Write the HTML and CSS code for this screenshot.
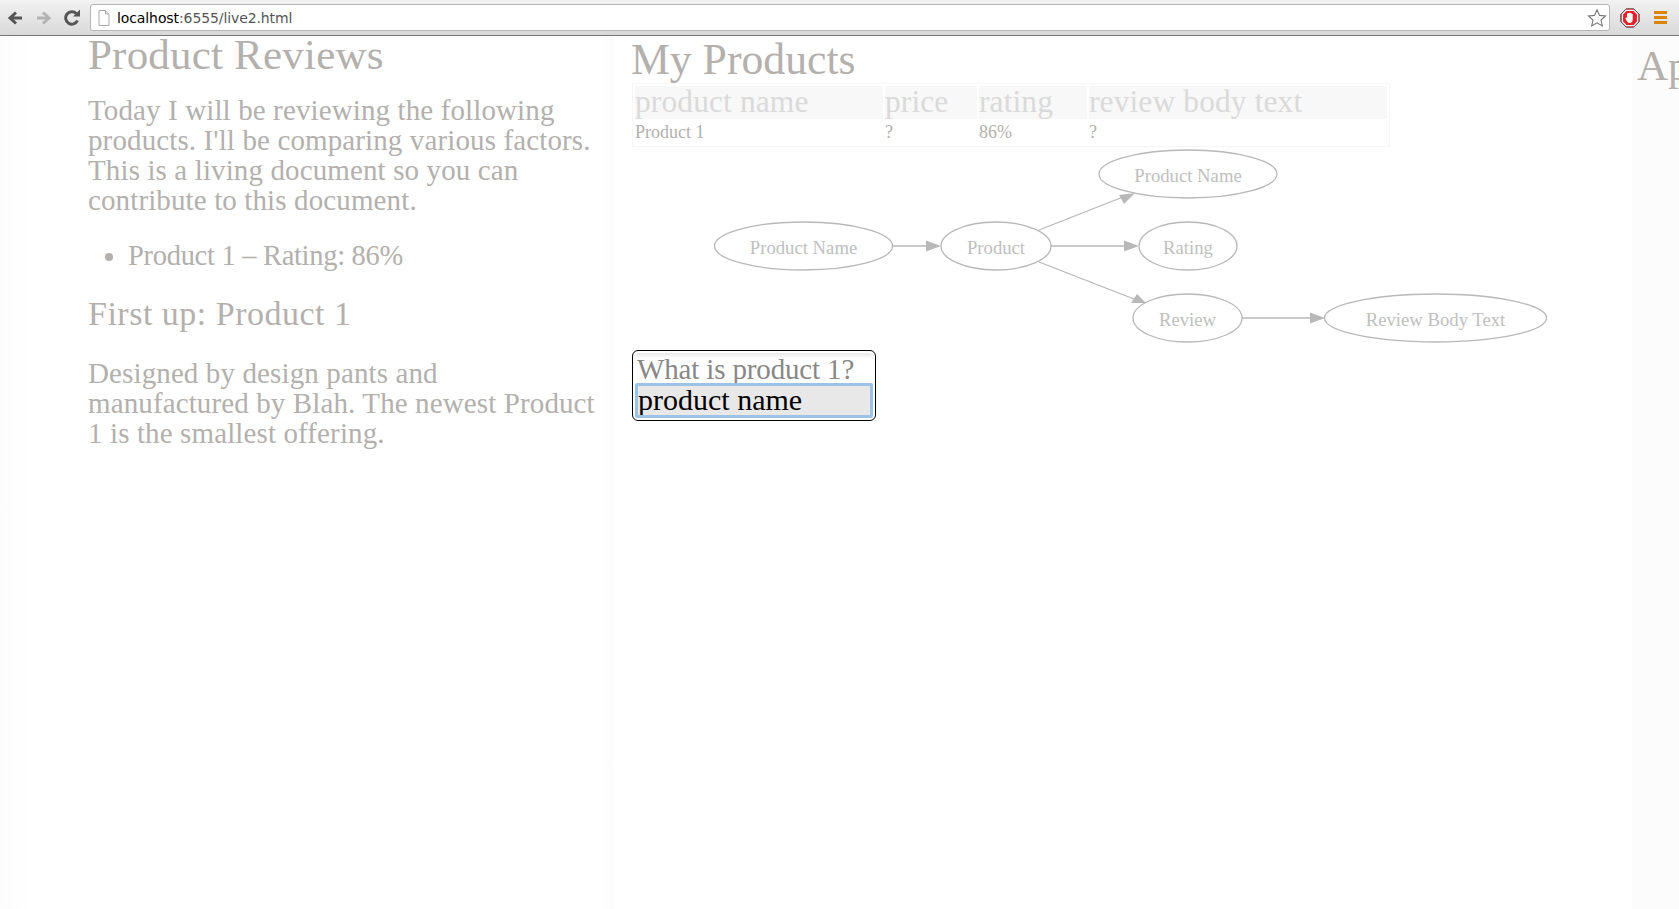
FILE: index.html
```html
<!DOCTYPE html>
<html lang="en">
<head>
<meta charset="utf-8">
<title>live2</title>
<link rel="stylesheet" href="styles.css">
</head>
<body>
<header class="toolbar">
  <svg class="tool back" width="20" height="20" viewBox="0 0 20 20"><path d="M17 10H6M11 4.500 5 10l6 5.500" fill="none" stroke="#555" stroke-width="3"/></svg>
  <svg class="tool fwd" width="20" height="20" viewBox="0 0 20 20"><path d="M3 10h11M9 4.500 15 10l-6 5.500" fill="none" stroke="#b4b4b4" stroke-width="3"/></svg>
  <svg class="tool reload" width="20" height="20" viewBox="0 0 20 20"><path d="M15.500 12.500A6.200 6.200 0 1 1 14.300 5.600" fill="none" stroke="#555" stroke-width="3"/><path d="M11 8.500h7v-7z" fill="#555"/></svg>
  <div class="urlbar">
    <svg class="doc" width="12" height="16" viewBox="0 0 12 16"><path d="M1 .5h6.500l3.500 3.500v11.500H1z" fill="#fff" stroke="#aaa"/><path d="M7.500.5V4H11" fill="#e8e8e8" stroke="#aaa"/></svg>
    <span class="url"><span class="host">localhost</span>:6555/live2.html</span>
    <svg class="star" width="20" height="20" viewBox="0 0 20 20"><path d="m10 1.800 2.500 5.600 6 .6-4.500 4 1.300 6-5.300-3.100L4.700 18 6 12 1.500 8l6-.6z" fill="#fff" stroke="#777" stroke-width="1.100"/></svg>
  </div>
  <svg class="ext" width="20" height="20" viewBox="0 0 20 20"><path d="M6.200.8h7.600l5.400 5.400v7.600l-5.400 5.400H6.200L.8 13.800V6.200z" fill="#e8202a" stroke="#555" stroke-width="1"/><path d="M6.200 2.400h7.600l3.800 3.800v7.600l-3.800 3.800H6.200l-3.800-3.800V6.200z" fill="#e8202a" stroke="#fff" stroke-width="1.300"/><path d="M7 9V5.500h1.300V5h1V4.800h1.200V5.300h1.200V6h1V11.500c0 2-1 3.500-3 3.500-1.800 0-2.500-1-3.500-3L5.300 10l1-.3z" fill="#fff"/></svg>
  <div class="menu"><i></i><i></i><i></i></div>
</header>
<main class="page">
  <section class="doc-pane">
    <h1 class="doc-title">Product Reviews</h1>
    <p class="intro">Today I will be reviewing the following<br>products. I'll be comparing various factors.<br>This is a living document so you can<br>contribute to this document.</p>
    <ul class="list"><li>Product 1 – Rating: 86%</li></ul>
    <h2 class="sub">First up: Product 1</h2>
    <p class="detail">Designed by design pants and<br>manufactured by Blah. The newest Product<br>1 is the smallest offering.</p>
  </section>
  <section class="app-pane">
    <h1 class="app-title">My Products</h1>
    <table class="products">
      <thead><tr><th class="c1">product name</th><th class="c2">price</th><th class="c3">rating</th><th class="c4">review body text</th></tr></thead>
      <tbody><tr><td>Product 1</td><td>?</td><td>86%</td><td>?</td></tr></tbody>
    </table>
    <svg class="graph" width="860" height="199" viewBox="700 147 860 199">
      <g class="shapes">
        <ellipse cx="803.500" cy="246" rx="89" ry="24"/>
        <ellipse cx="996" cy="246" rx="55" ry="24"/>
        <ellipse cx="1188" cy="174" rx="89" ry="24"/>
        <ellipse cx="1188" cy="246" rx="49" ry="24"/>
        <ellipse cx="1187.500" cy="318" rx="54.500" ry="24"/>
        <ellipse cx="1435.500" cy="318" rx="111" ry="24"/>
        <path d="M893 246h35M1051 246h74M1242 318h70M1039 230l84-33M1039 262l95 37"/>
      </g>
      <g class="heads">
        <path d="M941 246l-15-5.500v11z"/>
        <path d="M1139 246l-15-5.500v11z"/>
        <path d="M1325 318l-15-5.500v11z"/>
        <path d="M1135 193l-16 2 5 9z"/>
        <path d="M1146 303l-9-9-6 9z"/>
      </g>
      <g class="labels">
        <text x="803.500" y="254">Product Name</text>
        <text x="996" y="254">Product</text>
        <text x="1188" y="182">Product Name</text>
        <text x="1188" y="254">Rating</text>
        <text x="1187.500" y="326">Review</text>
        <text x="1435.500" y="326">Review Body Text</text>
      </g>
    </svg>
    <form class="ask">
      <label class="ask-label" for="answer">What is product 1?</label>
      <input class="ask-input" id="answer" type="text" value="product name">
    </form>
  </section>
  <section class="side-pane"><h1 class="side-title">Ap</h1></section>
</main>
</body>
</html>
```
FILE: styles.css
```css
* { box-sizing: border-box; }
html, body { margin: 0; height: 100%; overflow: hidden; background: #fff; }
body { display: flex; flex-direction: column; font-family: "Liberation Serif", "Times New Roman", serif; }

.toolbar { flex: none; height: 36px; display: flex; align-items: center; padding: 0 0 0 5px; background: linear-gradient(#f2f2f2, #d9d9d9); border-bottom: 1px solid #777; }
.tool { flex: none; }
.back { margin-right: 9px; }
.fwd { margin-right: 8px; }
.reload { margin-right: 8px; }
.urlbar { flex: 1; height: 27px; display: flex; align-items: center; padding: 0 2px 0 7px; background: #fff; border: 1px solid #b4b4b4; border-radius: 3px; }
.doc { flex: none; margin-right: 7px; }
.url { flex: 1; font: 14px/1 "DejaVu Sans", sans-serif; letter-spacing: -.1px; color: #555; }
.host { color: #000; }
.star { flex: none; }
.ext { flex: none; margin: 0 0 0 10px; }
.menu { flex: none; width: 13px; margin: 0 12px 0 14px; display: flex; flex-direction: column; gap: 2px; }
.menu i { height: 3px; background: #dd8400; }

.page { flex: 1; display: flex; min-height: 0; color: #b3b0ae; }
.doc-pane { flex: none; width: 613px; padding: 0 0 0 88px; background: linear-gradient(90deg, #fcfcfc, #fff 30px, #fff 600px, #fbfbfb); }
.app-pane { flex: none; width: 1019px; padding: 0 0 0 19px; }
.side-pane { flex: 1; min-width: 0; overflow: hidden; padding-left: 5px; background: #fcfcfc; }

.doc-title { margin: 0; font-size: 43px; line-height: 38px; font-weight: 400; letter-spacing: .2px; }
.intro { margin: 21px 0 0; font-size: 29px; line-height: 30px; letter-spacing: .12px; }
.list { margin: 26px 0 0; padding: 0 0 0 40px; font-size: 28.500px; line-height: 30px; letter-spacing: -.3px; }
.sub { margin: 25px 0 0; font-size: 34px; line-height: 36px; font-weight: 400; letter-spacing: .5px; }
.detail { margin: 26px 0 0; font-size: 29px; line-height: 30px; letter-spacing: .12px; }

.app-title { margin: 0 0 0 -1px; padding-top: 1px; font-size: 43.700px; line-height: 44px; font-weight: 400; }
.products { width: 758px; margin: 2px 0 0; border: 1px solid #f6f6f6; border-spacing: 2px; border-collapse: separate; table-layout: fixed; }
.products th { height: 33px; padding: 0 0 2px; background: #f8f8f8; font-size: 31.500px; line-height: 31px; font-weight: 400; letter-spacing: .1px; text-align: left; color: #dadada; }
.products td { height: 23px; padding: 0; font-size: 18px; line-height: 23px; color: #b3b0ae; }
.c1 { width: 248px; }
.c2 { width: 92px; }
.c3 { width: 108px; }

.graph { display: block; margin: 0 0 0 68px; }
.shapes ellipse, .shapes path { fill: none; stroke: #b8b8b8; stroke-width: 1.300; }
.heads path { fill: #b8b8b8; }
.labels text { font-family: "Liberation Serif", serif; font-size: 18.700px; fill: #c0c0c0; text-anchor: middle; }

.ask { width: 244px; height: 71px; margin: 4px 0 0; padding: 2px 2px 0; display: flex; flex-direction: column; border: 1px solid #000; border-radius: 6px; background: #fff; }
.ask-label { height: 30px; padding-left: 2px; font-size: 29px; line-height: 32px; letter-spacing: -.15px; color: #888; border-radius: 4px 4px 0 0; background: linear-gradient(#e8e8e8, #fff 6px); }
.ask-input { width: 238px; height: 35px; margin: 0; padding: 0 0 2px; font: 30px/30px "Liberation Serif", serif; color: #000; background: #e8e8e8; border: 3px solid #9cc3e5; border-radius: 2px; outline: none; }

.side-title { margin: 0; padding-top: 8px; font-size: 43px; line-height: 44px; font-weight: 400; white-space: nowrap; }
```
